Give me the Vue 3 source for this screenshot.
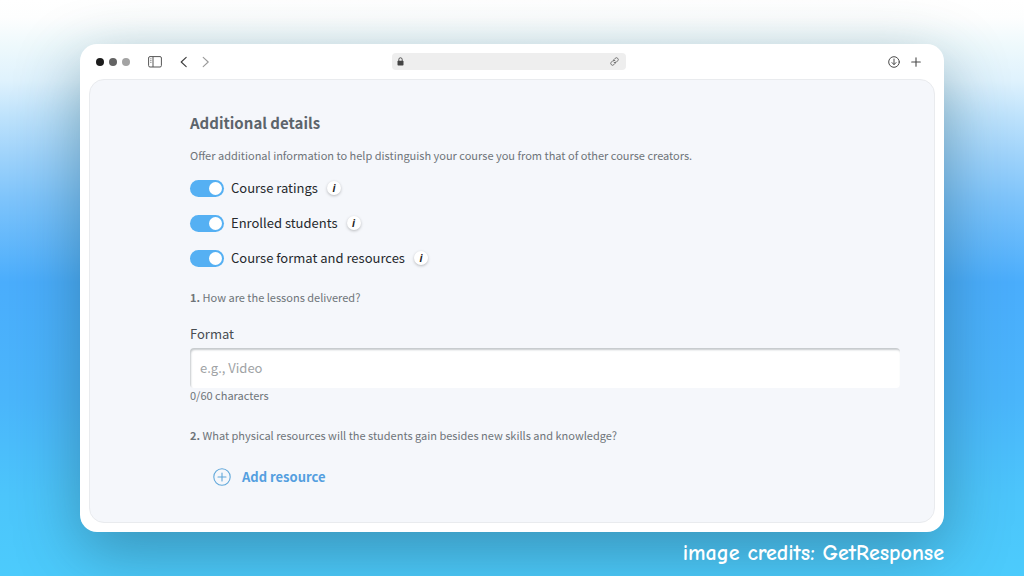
<script setup>
import { reactive, ref } from 'vue'

const options = reactive([
  { id: 'ratings', label: 'Course ratings', on: true },
  { id: 'students', label: 'Enrolled students', on: true },
  { id: 'resources', label: 'Course format and resources', on: true },
])
const format = ref('')
const limit = 60
</script>

<template>
  <div class="stage">
    <main class="window">
      <header class="toolbar">
        <div class="side">
          <div class="dots"><i class="dot d1"></i><i class="dot d2"></i><i class="dot d3"></i></div>
          <button class="icon sidebar" type="button" aria-label="Toggle sidebar">
            <svg width="14" height="12" viewBox="0 0 14 12" fill="none" stroke="#555" stroke-width="1">
              <rect x=".6" y=".6" width="12.8" height="10.4" rx="1.4" />
              <path d="M5 .6V11" />
              <path d="M2 2.8h1.6M2 4.6h1.6M2 6.4h1.6" stroke="#888" stroke-width=".8" />
            </svg>
          </button>
          <button class="icon" type="button" aria-label="Back">
            <svg width="8" height="12" viewBox="0 0 8 12" fill="none" stroke="#3c3c3c" stroke-width="1.1" stroke-linecap="round" stroke-linejoin="round"><path d="M6.2 1.3 1.2 6l5 4.7" /></svg>
          </button>
          <button class="icon" type="button" aria-label="Forward">
            <svg width="8" height="12" viewBox="0 0 8 12" fill="none" stroke="#9a9a9a" stroke-width="1.1" stroke-linecap="round" stroke-linejoin="round"><path d="m1.2 1.3 5 4.7-5 4.7" /></svg>
          </button>
        </div>
        <div class="address">
          <svg width="7" height="9" viewBox="0 0 7 9"><rect x=".5" y="3.8" width="6" height="4.7" rx=".8" fill="#444" /><path d="M1.8 4V2.5a1.7 1.7 0 0 1 3.4 0V4" fill="none" stroke="#444" stroke-width=".9" /></svg>
          <svg width="9" height="9" viewBox="0 0 9 9" fill="none" stroke="#666" stroke-width=".9" stroke-linecap="round"><path d="M3.9 2.6 5.2 1.3a1.75 1.75 0 0 1 2.5 2.5L6.3 5.2a1.75 1.75 0 0 1-2.5 0" /><path d="M5.1 6.4 3.8 7.7a1.75 1.75 0 0 1-2.5-2.5l1.4-1.4a1.75 1.75 0 0 1 2.5 0" /></svg>
        </div>
        <div class="side right">
          <button class="icon" type="button" aria-label="Downloads">
            <svg width="12" height="12" viewBox="0 0 12 12" fill="none" stroke="#4a4a4a" stroke-width="1" stroke-linecap="round" stroke-linejoin="round"><circle cx="6" cy="6" r="5.3" /><path d="M6 3v5.4M4 6.6l2 2 2-2" /></svg>
          </button>
          <button class="icon" type="button" aria-label="New tab">
            <svg width="10" height="10" viewBox="0 0 10 10" fill="none" stroke="#4a4a4a" stroke-width="1.1" stroke-linecap="round"><path d="M5 .7v8.6M.7 5h8.6" /></svg>
          </button>
        </div>
      </header>

      <form class="panel" @submit.prevent>
        <h1>Additional details</h1>
        <p class="intro">Offer additional information to help distinguish your course you from that of other course creators.</p>
        <div class="options">
          <div v-for="o in options" :key="o.id" class="option">
            <input :id="o.id" v-model="o.on" class="switch" type="checkbox" role="switch" />
            <label :for="o.id">{{ o.label }}</label>
            <button class="info" type="button" :aria-label="'About ' + o.label">i</button>
          </div>
        </div>
        <p class="question"><b>1.</b> How are the lessons delivered?</p>
        <label class="field-label" for="format">Format</label>
        <input id="format" v-model="format" class="field" type="text" placeholder="e.g., Video" :maxlength="limit" />
        <p class="count">{{ format.length }}/{{ limit }} characters</p>
        <p class="question second"><b>2.</b> What physical resources will the students gain besides new skills and knowledge?</p>
        <button class="add" type="button">
          <svg width="18" height="18" viewBox="0 0 18 18" fill="none" stroke="#61a8da" stroke-width="1.1" stroke-linecap="round"><circle cx="9" cy="9" r="8.2" /><path d="M9 5v8M5 9h8" /></svg>
          <span>Add resource</span>
        </button>
      </form>
    </main>
    <footer class="credits">image credits: GetResponse</footer>
  </div>
</template>

<style>
body {
  margin: 0;
}
</style>

<style scoped>
.stage {
  box-sizing: border-box;
  min-height: 100vh;
  padding: 44px 80px 8px;
  background: linear-gradient(180deg, #ffffff 0, #fdfefe 3%, #eef9fc 8%, #dff2fd 14%, #bfe3fc 20%, #9fd3fb 27%, #7cc3fb 35%, #4aadfc 49%, #4ab5fb 69%, #4cc5fb 86%, #4ccbfc 100%);
  font-family: "Noto Sans CJK SC", "Noto Sans", sans-serif;
  color: #6e7479;
}
.window {
  box-sizing: border-box;
  padding: 0 9px 9px;
  border-radius: 17px;
  background: #fff;
  box-shadow: 0 20px 64px rgba(35, 85, 100, 0.46);
}
.toolbar {
  display: grid;
  grid-template-columns: 1fr 234px 1fr;
  align-items: center;
  height: 35px;
  padding-right: 6px;
}
.side {
  display: flex;
  align-items: center;
  gap: 14px;
  padding-left: 7px;
}
.right {
  justify-content: flex-end;
  gap: 11px;
  padding: 0 8px 0 0;
}
.dots {
  display: flex;
  gap: 5px;
  margin-right: 4px;
}
.dot {
  width: 8px;
  height: 8px;
  border-radius: 50%;
}
.d1 { background: #1c1c1c; }
.d2 { background: #636363; }
.d3 { background: #a3a3a3; }
button {
  display: inline-flex;
  align-items: center;
  border: 0;
  padding: 0;
  background: none;
  font-family: inherit;
  cursor: pointer;
}
.sidebar {
  margin-right: 4px;
}
.address {
  display: flex;
  align-items: center;
  justify-content: space-between;
  box-sizing: border-box;
  height: 17px;
  padding: 0 7px 0 5px;
  border-radius: 4px;
  background: #eee;
}
.panel {
  display: flex;
  flex-direction: column;
  padding: 33px 34px 35px 100px;
  border: 1px solid #e9ebee;
  border-radius: 15px;
  background: #f5f7fb;
}
h1, p {
  margin: 0;
}
h1 {
  font-size: 15px;
  line-height: 20px;
  font-weight: 700;
  color: #5c646b;
}
.intro, .question {
  font-size: 11px;
  line-height: 16px;
}
.intro {
  margin-top: 14px;
}
.options {
  display: flex;
  flex-direction: column;
  gap: 15px;
  margin: 15px 0 21px;
}
.option {
  display: flex;
  align-items: center;
  height: 20px;
  font-size: 13px;
  line-height: 20px;
  color: #25292d;
}
.switch {
  appearance: none;
  display: flex;
  align-items: center;
  box-sizing: border-box;
  width: 34px;
  height: 17px;
  margin: 0 7px 0 0;
  padding: 0 2px;
  border-radius: 9px;
  background: #b8c0c7;
}
.switch::before {
  content: "";
  width: 13px;
  height: 13px;
  border-radius: 50%;
  background: #fff;
}
.switch:checked {
  justify-content: flex-end;
  background: #55b0f3;
}
.info {
  justify-content: center;
  width: 14px;
  height: 14px;
  margin-left: 9px;
  border-radius: 50%;
  background: #fff;
  box-shadow: 0 1px 3px rgba(0, 0, 0, 0.25);
  font: italic 700 10px/14px "Open Sans", sans-serif;
  color: #222;
}
.field-label {
  margin: 19px 0 4px;
  font-size: 13px;
  line-height: 20px;
  color: #474d52;
}
.field {
  box-sizing: border-box;
  width: 100%;
  height: 40px;
  padding: 0 10px 2px;
  border: 0;
  border-radius: 4px;
  background: #fff;
  box-shadow: inset 1px 2px 2px #c6cacd;
  font: 13px/20px "Noto Sans CJK SC", "Noto Sans", sans-serif;
  color: #474d52;
}
.field::placeholder {
  color: #a0a3a5;
  opacity: 1;
}
.count {
  font-size: 11px;
  line-height: 14px;
}
.second {
  margin-top: 25px;
}
.add {
  align-self: flex-start;
  gap: 11px;
  margin: 24px 0 0 23px;
  font-size: 13px;
  line-height: 20px;
  font-weight: 700;
  color: #549fe0;
}
.credits {
  margin-top: 8px;
  text-align: right;
  font: 700 22px/26px "Comic Neue", "Noto Sans", sans-serif;
  color: #fff;
}
</style>
